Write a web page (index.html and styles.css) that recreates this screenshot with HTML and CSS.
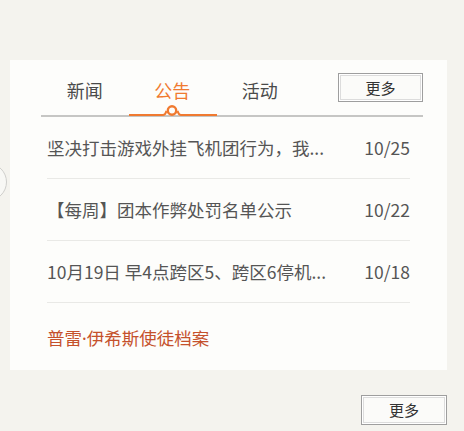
FILE: index.html
```html
<!DOCTYPE html>
<html lang="zh-CN">
<head>
<meta charset="utf-8">
<link rel="stylesheet" href="styles.css">
</head>
<body>
<div class="page">
  <div class="ring"></div>
  <section class="card">
    <div class="tabbar">
      <div class="tabs">
        <span class="tab">新闻</span>
        <span class="tab active">公告
          <svg class="indicator" width="88" height="13" viewBox="0 0 88 13">
            <path d="M0 11 H34 C36.5 11 36.5 9 37.5 7" fill="none" stroke="#f07a30" stroke-width="2"/>
            <path d="M48.5 7 C49.5 9 49.5 11 52 11 H88" fill="none" stroke="#f07a30" stroke-width="2"/>
            <circle cx="43" cy="6.5" r="4.2" fill="none" stroke="#f07a30" stroke-width="2.4"/>
          </svg>
        </span>
        <span class="tab">活动</span>
      </div>
      <button class="more">更多</button>
    </div>
    <ul class="list">
      <li class="row"><span class="title">坚决打击游戏外挂飞机团行为，我...</span><span class="date">10/25</span></li>
      <li class="row"><span class="title">【每周】团本作弊处罚名单公示</span><span class="date">10/22</span></li>
      <li class="row"><span class="title">10月19日 早4点跨区5、跨区6停机...</span><span class="date">10/18</span></li>
    </ul>
    <a class="featured">普雷<span class="dot">·</span>伊希斯使徒档案</a>
  </section>
  <div class="footer">
    <button class="more">更多</button>
  </div>
</div>
</body>
</html>
```

FILE: styles.css
```css
* { box-sizing: border-box; }
html, body {
  margin: 0;
  padding: 0;
  background: #f4f3ee;
  font-family: "Noto Sans CJK SC", "Noto Sans", sans-serif;
  color: #555;
}
.page {
  position: relative;
  width: 464px;
  height: 431px;
  padding-top: 60px;
  overflow: hidden;
}
.ring {
  position: absolute;
  left: -31px;
  top: 163px;
  width: 38px;
  height: 38px;
  border-radius: 50%;
  border: 1.5px solid #cfcfcc;
  background: #f8f8f5;
}
.card {
  margin-left: 10px;
  width: 437px;
  height: 310px;
  background: #fdfdfb;
  padding: 0 37px 0 31px;
}
.tabbar {
  display: flex;
  justify-content: space-between;
  align-items: flex-start;
  height: 57px;
  border-bottom: 2px solid #c6c6c4;
  margin-right: -13px;
}
.tabs {
  display: flex;
  height: 55px;
}
.tab {
  position: relative;
  width: 87.5px;
  text-align: center;
  font-size: 18px;
  line-height: 24px;
  padding-top: 18px;
  color: #4a4a4a;
}
.tab.active {
  color: #f07a30;
}
.indicator {
  position: absolute;
  left: 0;
  bottom: -2px;
  display: block;
}
.more {
  margin-top: 13px;
  width: 85px;
  height: 29px;
  border: 1px solid #9e9e9e;
  box-shadow: inset 0 0 0 1px #ffffff, inset 0 0 0 2px #dcdcdc;
  background: #fbfbf9;
  font-family: "Noto Sans CJK SC", sans-serif;
  font-size: 15px;
  line-height: 20px;
  color: #333;
  padding: 0;
}
.list {
  list-style: none;
  margin: 0;
  padding: 0 0 0 6px;
}
.row {
  display: flex;
  justify-content: space-between;
  align-items: center;
  height: 62px;
  border-bottom: 1px solid #e9e9e6;
  font-size: 17.5px;
  line-height: 24px;
  padding-top: 1px;
}
.title { color: #555; }
.date { color: #555; }
.featured {
  display: block;
  margin: 23px 0 0 6px;
  font-size: 17.5px;
  line-height: 24px;
  color: #c5512c;
}
.dot {
  font-family: "Noto Sans", sans-serif;
}
.footer {
  display: flex;
  justify-content: flex-end;
  width: 447px;
  padding-top: 12px;
}
.footer .more {
  width: 86px;
  height: 30px;
}
```
